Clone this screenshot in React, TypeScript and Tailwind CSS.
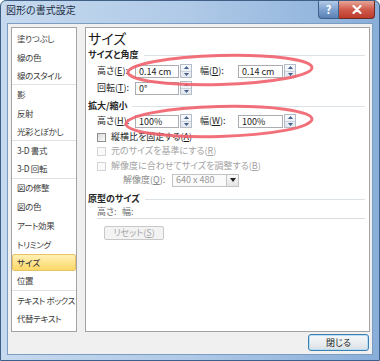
import React from "react";

const items = [
  { label: "塗りつぶし" },
  { label: "線の色" },
  { label: "線のスタイル", sep: true },
  { label: "影" },
  { label: "反射" },
  { label: "光彩とぼかし", sep: true },
  { label: "3-D 書式" },
  { label: "3-D 回転", sep: true },
  { label: "図の修整" },
  { label: "図の色" },
  { label: "アート効果" },
  { label: "トリミング" },
  { label: "サイズ", active: true },
  { label: "位置", sep: true },
  { label: "テキスト ボックス" },
  { label: "代替テキスト" },
];

function Key({ k }: { k: string }) {
  return <span className="underline underline-offset-1">{k}</span>;
}

function Spin() {
  return (
    <div className="flex h-[14px] w-[12px] flex-col border border-[#b4bcc8] bg-gradient-to-b from-[#f8fafc] to-[#e2e7ee]">
      <div className="flex flex-1 items-center justify-center border-b border-[#cbd2db]">
        <svg width="5" height="3" viewBox="0 0 5 3">
          <path d="M2.5 0L5 3H0z" fill="#3f5f8a" />
        </svg>
      </div>
      <div className="flex flex-1 items-center justify-center">
        <svg width="5" height="3" viewBox="0 0 5 3">
          <path d="M0 0H5L2.5 3z" fill="#3f5f8a" />
        </svg>
      </div>
    </div>
  );
}

function Field({ value, wide }: { value: string; wide?: boolean }) {
  return (
    <div
      className={
        wide
          ? "flex h-[13px] w-[45px] items-center border border-[#abadb3] bg-white pl-[3px] text-[9px] leading-none text-[#1e1e1e]"
          : "flex h-[13px] w-[44px] items-center border border-[#abadb3] bg-white pl-[3px] text-[9px] leading-none text-[#1e1e1e]"
      }
    >
      {value}
    </div>
  );
}

function Section({ title }: { title: string }) {
  return (
    <div className="flex h-[14px] items-center gap-[5px] pr-[4px]">
      <span className="whitespace-nowrap text-[9px] font-bold leading-[14px] text-[#262626]">{title}</span>
      <div className="h-px flex-1 bg-[#dbe2e8]" />
    </div>
  );
}

function Check({ label, k, disabled }: { label: string; k: string; disabled?: boolean }) {
  return (
    <div className="ml-[9px] flex h-[14px] items-center gap-[5px] whitespace-nowrap">
      <div
        className={
          disabled
            ? "h-[9px] w-[9px] border border-[#d4d4d4] bg-[#fafafa]"
            : "h-[9px] w-[9px] border border-[#8e8f8f] bg-gradient-to-br from-[#d9d9d9] to-[#fbfbfb]"
        }
      />
      <span className={disabled ? "text-[9px] text-[#a3a3a3]" : "text-[9px] text-[#1e1e1e]"}>
        {label}(<Key k={k} />)
      </span>
    </div>
  );
}

function SizeRow({ a, b, va, vb }: { a: string; b: string; va: string; vb: string }) {
  return (
    <div className="ml-[9px] flex h-[14px] items-center whitespace-nowrap text-[9px] text-[#1e1e1e]">
      <span className="w-[38px]">
        高さ(<Key k={a} />):
      </span>
      <Field value={va} />
      <div className="ml-[1px]">
        <Spin />
      </div>
      <span className="ml-[8px] w-[38px]">
        幅(<Key k={b} />):
      </span>
      <Field value={vb} wide />
      <div className="ml-[1px]">
        <Spin />
      </div>
    </div>
  );
}

export default function App() {
  return (
    <div className="relative h-[361px] w-[380px] overflow-hidden bg-white font-['Noto_Sans_CJK_JP',sans-serif] [font-feature-settings:'palt']">
      <div className="flex h-full flex-col rounded-t-[6px] border border-[#3f5f86] bg-gradient-to-r from-[#c6daef] via-[#afc9e7] to-[#88aed9]">
        {/* title bar */}
        <div className="flex h-[22px] items-start">
          <span className="pl-[5px] pt-[2px] text-[10px] leading-[14px] text-[#1d2e44]">図形の書式設定</span>
          <div className="flex-1" />
          <div className="mr-[4px] flex">
            <div className="flex h-[18px] w-[21px] items-center justify-center rounded-bl-[4px] border border-t-0 border-[#3e5f88] bg-gradient-to-b from-[#b3cbe8] via-[#7fa2cf] to-[#5a82b6] text-[11px] font-bold leading-none text-white">
              ?
            </div>
            <div className="flex h-[18px] w-[36px] items-center justify-center rounded-br-[4px] border border-l-0 border-t-0 border-[#6e2a22] bg-gradient-to-b from-[#e6a597] via-[#d05a4b] to-[#bd3b2c]">
              <svg width="10" height="9" viewBox="0 0 10 9">
                <path d="M1.5 1L8.5 8M8.5 1L1.5 8" stroke="#fff" strokeWidth="2.2" strokeLinecap="round" />
              </svg>
            </div>
          </div>
        </div>

        {/* client area */}
        <div className="mx-[6px] flex h-[332px] flex-col border border-[#7d9cc2] bg-[#f0f0f0] px-[3px] pt-[3px] pr-[2px]">
          <div className="flex h-[305px] gap-[8px]">
            {/* category list */}
            <div className="flex w-[66px] flex-col overflow-hidden border border-[#a3a3a3] bg-white pt-px text-[8.5px] text-[#3c3c3c]">
              {items.map((it) => (
                <div
                  key={it.label}
                  className={
                    it.sep
                      ? "flex h-[18.7px] shrink-0 flex-col whitespace-nowrap border-b border-[#e2e2e2]"
                      : "flex h-[18.7px] shrink-0 flex-col whitespace-nowrap"
                  }
                >
                  {it.active ? (
                    <div className="my-[1px] flex flex-1 items-center rounded-[2px] border border-[#e6c365] bg-gradient-to-b from-[#fff0b4] to-[#fcd865] pl-[4px] text-[#2a2a2a]">
                      {it.label}
                    </div>
                  ) : (
                    <div className="flex flex-1 items-center pl-[5px] tracking-[-0.4px]">{it.label}</div>
                  )}
                </div>
              ))}
            </div>

            {/* settings panel */}
            <div className="flex flex-1 flex-col border border-[#a3a3a3] bg-white pl-[2px] pt-[2px]">
              <div className="h-[16px] text-[14px] leading-[16px] text-[#1a1a1a]">サイズ</div>
              <div className="mt-[2px]">
                <Section title="サイズと角度" />
              </div>
              <div className="mt-[2px]">
                <SizeRow a="E" b="D" va="0.14 cm" vb="0.14 cm" />
              </div>
              <div className="ml-[9px] mt-[3px] flex h-[14px] items-center whitespace-nowrap text-[9px] text-[#1e1e1e]">
                <span className="w-[38px]">
                  回転(<Key k="T" />):
                </span>
                <Field value="0°" />
                <div className="ml-[1px]">
                  <Spin />
                </div>
              </div>
              <div className="mt-[4px]">
                <Section title="拡大/縮小" />
              </div>
              <div className="mt-[1px]">
                <SizeRow a="H" b="W" va="100%" vb="100%" />
              </div>
              <div className="mt-[2px]">
                <Check label="縦横比を固定する" k="A" />
              </div>
              <Check label="元のサイズを基準にする" k="R" disabled />
              <div className="mt-[1px]">
                <Check label="解像度に合わせてサイズを調整する" k="B" disabled />
              </div>
              <div className="ml-[35px] flex h-[14px] items-center whitespace-nowrap text-[9px] text-[#8a8a8a]">
                <span className="w-[49px]">
                  解像度(<Key k="Q" />):
                </span>
                <div className="flex h-[13px] w-[67px] items-center border border-[#c3c3c3] bg-[#fbfbfb]">
                  <span className="flex-1 pl-[3px] text-[#9a9a9a]">640 x 480</span>
                  <div className="flex h-full w-[12px] items-center justify-center border-l border-[#c3c3c3] bg-gradient-to-b from-[#fafafa] to-[#e4e4e4]">
                    <svg width="6" height="4" viewBox="0 0 6 4">
                      <path d="M0 0H6L3 4z" fill="#222" />
                    </svg>
                  </div>
                </div>
              </div>
              <div className="mt-[5px]">
                <Section title="原型のサイズ" />
              </div>
              <div className="ml-[9px] mr-[4px] flex h-[13px] items-center border-b border-[#dcdcdc] text-[9px] text-[#6e6e6e]">
                <span className="w-[25px]">高さ:</span>
                <span>幅:</span>
              </div>
              <div className="ml-[16px] mt-[7px] flex h-[14px] w-[60px] items-center justify-center whitespace-nowrap rounded-[2px] border border-[#c8c8c8] bg-[#f3f3f3] text-[9px] text-[#a6a6a6]">
                リセット(<Key k="S" />)
              </div>
            </div>
          </div>

          <div className="mt-[2px] flex justify-end pr-[1px]">
            <div className="flex h-[17px] w-[61px] items-center justify-center rounded-[3px] border border-[#3c7fb1] bg-gradient-to-b from-[#f5f8fa] via-[#eaeef1] to-[#d9dfe4] text-[9px] text-[#1e1e1e] shadow-[inset_0_0_0_1px_#b7def5]">
              閉じる
            </div>
          </div>
        </div>
        <div className="h-[5px]" />
      </div>

      {/* red highlight ellipses */}
      <svg className="pointer-events-none absolute left-0 top-0" width="380" height="361" viewBox="0 0 380 361">
        <ellipse cx="220" cy="70" rx="92" ry="14.5" transform="rotate(-1.5 220 70)" fill="none" stroke="#f0606c" strokeWidth="3" opacity="0.9" />
        <ellipse cx="219" cy="121.5" rx="93" ry="15" transform="rotate(-1.5 219 121.5)" fill="none" stroke="#f0606c" strokeWidth="3" opacity="0.9" />
      </svg>
    </div>
  );
}
